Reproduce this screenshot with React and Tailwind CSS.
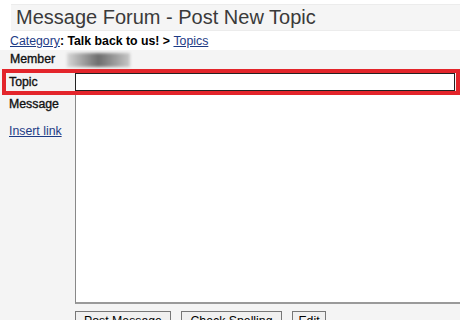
export default function App() {
  return (
    <div className="w-[460px] h-[320px] overflow-hidden bg-white font-['Liberation_Sans',Arial,sans-serif] text-black">
      <div className="mt-[4px] ml-[11px] h-[27px] border-y border-[#ececec] bg-[#f5f5f5] pl-[5px] text-[20px] leading-[25px] text-[#3a3a3a]">
        Message Forum - Post New Topic
      </div>
      <div className="mt-[2px] h-[17px] pl-[10px] text-[12.3px] leading-[17px] font-bold">
        <a href="#" className="font-normal text-[#1d3b86] underline">
          Category
        </a>
        : Talk back to us! &gt;{" "}
        <a href="#" className="font-normal text-[#1d3b86] underline">
          Topics
        </a>
      </div>
      <div className="bg-[#f4f4f4]">
        <div className="flex h-[19px] items-center">
          <div className="w-[67px] pl-[10px] text-[12.3px] text-[#111] [-webkit-text-stroke:0.35px_#111]">Member</div>
          <div className="h-[14px] w-[63px] bg-gradient-to-r from-[#d8d8d8] via-[#6e6e6e] to-[#c8c8c8] blur-[1.5px]" />
        </div>
        <div className="ml-[2px] flex h-[26px] w-[458px] items-center border-[4px] border-[#e3252b]">
          <div className="w-[69px] pl-[3px] text-[12.3px] text-[#111] [-webkit-text-stroke:0.35px_#111]">Topic</div>
          <input
            type="text"
            className="mr-[1px] h-[18px] flex-1 border border-[#222] bg-white outline-none"
          />
        </div>
        <div className="flex h-[209px]">
          <div className="w-[75px] pl-[9px] text-[12.3px]">
            <div className="mt-[2px] leading-[14px] text-[#111] [-webkit-text-stroke:0.35px_#111]">Message</div>
            <a href="#" className="mt-[13px] block leading-[14px] text-[#1d3b86] underline">
              Insert link
            </a>
          </div>
          <textarea className="flex-1 resize-none border-l border-b-2 border-l-[#888] border-b-[#9a9a9a] bg-white outline-none" />
        </div>
        <div className="flex gap-[10px] pl-[75px] pt-[7px] pb-[6px] text-[12.3px]">
          <button className="h-[21px] w-[96px] border border-[#777] bg-[#f0f0f0]">Post Message</button>
          <button className="h-[21px] w-[101px] border border-[#777] bg-[#f0f0f0]">Check Spelling</button>
          <button className="h-[21px] w-[34px] border border-[#777] bg-[#f0f0f0]">Edit</button>
        </div>
      </div>
    </div>
  );
}
